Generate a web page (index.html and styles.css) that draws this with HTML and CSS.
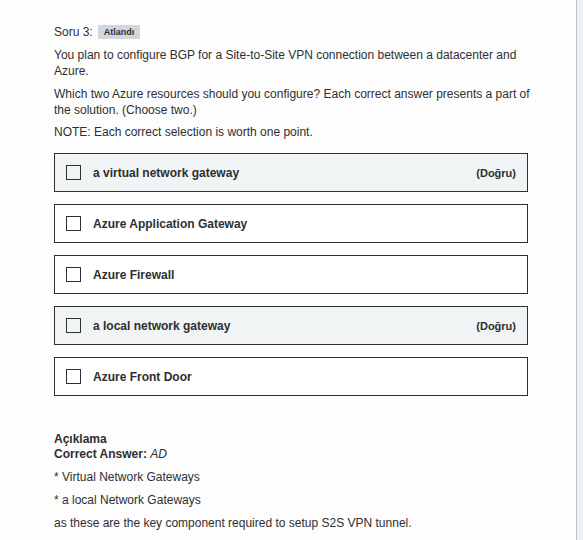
FILE: index.html
```html
<!DOCTYPE html>
<html>
<head>
<meta charset="utf-8">
<link rel="stylesheet" href="styles.css">
</head>
<body>
<div class="page">
  <div class="content">
    <div class="header">
      <span class="qnum">Soru 3:</span>
      <span class="badge">Atlandı</span>
    </div>
    <p class="p p1">You plan to configure BGP for a Site-to-Site VPN connection between a datacenter and Azure.</p>
    <p class="p p2">Which two Azure resources should you configure? Each correct answer presents a part of the solution. (Choose two.)</p>
    <p class="p p3">NOTE: Each correct selection is worth one point.</p>
    <ul class="options">
      <li class="option correct"><span class="box"></span><span class="label">a virtual network gateway</span><span class="tag">(Doğru)</span></li>
      <li class="option"><span class="box"></span><span class="label">Azure Application Gateway</span></li>
      <li class="option"><span class="box"></span><span class="label">Azure Firewall</span></li>
      <li class="option correct"><span class="box"></span><span class="label">a local network gateway</span><span class="tag">(Doğru)</span></li>
      <li class="option"><span class="box"></span><span class="label">Azure Front Door</span></li>
    </ul>
    <div class="explain">
      <div class="ex-title">Açıklama</div>
      <div class="ex-answer"><b>Correct Answer:</b> <i>AD</i></div>
      <p class="ex-p">* Virtual Network Gateways</p>
      <p class="ex-p">* a local Network Gateways</p>
      <p class="ex-p">as these are the key component required to setup S2S VPN tunnel.</p>
    </div>
  </div>
</div>
</body>
</html>
```
FILE: styles.css
```css
html, body {
  margin: 0;
  padding: 0;
}
body {
  background: #eef1f5;
  font-family: "Liberation Sans", Arial, sans-serif;
  font-size: 12px;
  color: #2d2f31;
}
.page {
  width: 576px;
  height: 540px;
  overflow: hidden;
  background: #fdfdfd;
  border-right: 1px solid #c4c4c4;
}
.content {
  width: 474px;
  padding: 24px 0 0 54px;
}
.header {
  display: flex;
  align-items: center;
  gap: 5px;
  height: 16px;
}
.qnum {
  font-size: 12px;
}
.badge {
  background: #d1d7dc;
  font-size: 9px;
  font-weight: bold;
  padding: 2px 6px;
  line-height: 10px;
}
.p {
  margin: 0;
  line-height: 16px;
  width: 480px;
}
.p1 { margin-top: 7px; }
.p2 { margin-top: 7px; }
.p3 { margin-top: 6px; }
.options {
  list-style: none;
  margin: 13px 0 0;
  padding: 0;
  display: flex;
  flex-direction: column;
  gap: 12px;
}
.option {
  display: flex;
  align-items: center;
  height: 37px;
  border: 1px solid #2d2f31;
  padding: 0 11px;
  background: #fff;
}
.option.correct {
  background: #f1f4f4;
}
.box {
  width: 13px;
  height: 13px;
  border: 1px solid #2d2f31;
  flex: none;
  background: #fff;
}
.correct .box { background: transparent; }
.label {
  margin-left: 12px;
  font-weight: bold;
  flex: 1;
}
.tag {
  font-weight: bold;
  font-size: 11px;
}
.explain {
  margin-top: 36px;
}
.ex-title {
  font-weight: bold;
  line-height: 15px;
}
.ex-answer {
  line-height: 15px;
}
.ex-answer i {
  font-weight: normal;
}
.ex-p {
  margin: 8px 0 0;
  line-height: 15px;
}
```
